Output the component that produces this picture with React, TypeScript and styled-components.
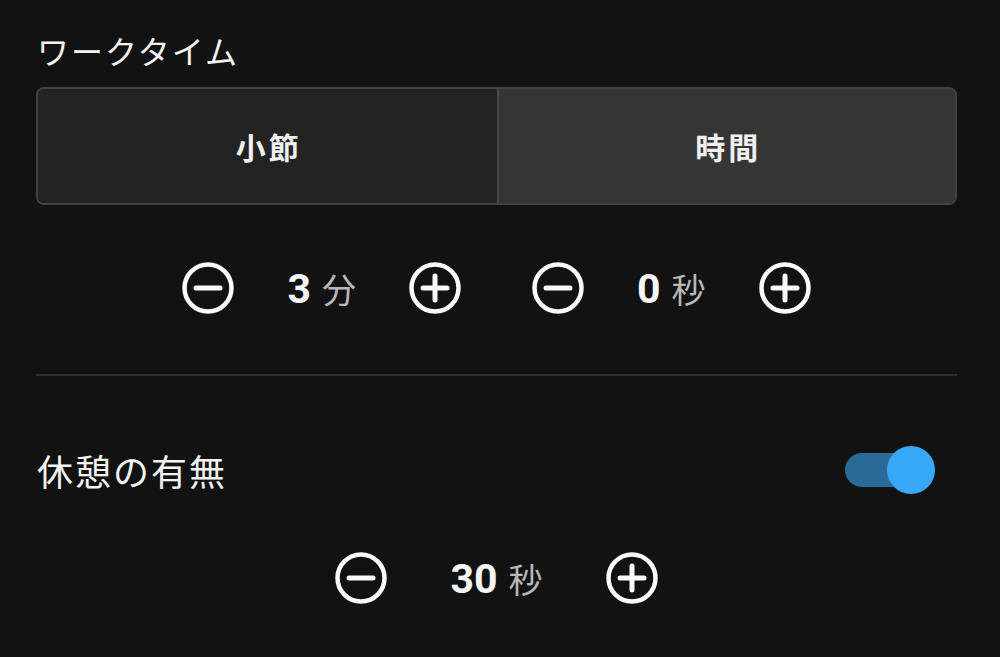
import React, { useState } from 'react';
import styled, { createGlobalStyle } from 'styled-components';

const GlobalStyle = createGlobalStyle`
	html, body {
		margin: 0;
		padding: 0;
		background: #121212;
	}
	body {
		font-family: 'Noto Sans CJK JP', 'Noto Sans', sans-serif;
		color: #f2f2f2;
	}
`;

const Panel = styled.div`
	width: 921px;
	padding: 31px 0 0 36px;
	display: flex;
	flex-direction: column;
`;

const SectionTitle = styled.div`
	font-size: 32px;
	line-height: 38px;
	letter-spacing: 2px;
	padding-left: 1px;
	color: #f4f4f4;
`;

const Segmented = styled.div`
	margin-top: 18px;
	height: 118px;
	box-sizing: border-box;
	display: grid;
	grid-template-columns: 1fr 1fr;
	border: 2px solid #424242;
	border-radius: 8px;
	overflow: hidden;
`;

const Segment = styled.button<{ $active: boolean }>`
	border: none;
	margin: 0;
	padding: 0 0 0 3px;
	background: ${(p) => (p.$active ? '#353535' : '#232323')};
	border-left: ${(p) => (p.$active ? '2px solid #474747' : 'none')};
	color: #f0f0f0;
	font-family: 'Noto Sans CJK JP', sans-serif;
	font-size: 30px;
	letter-spacing: 3px;
	font-weight: 700;
	cursor: pointer;
`;

const StepperLine = styled.div<{ $top: number }>`
	margin-top: ${(p) => p.$top}px;
	display: flex;
	justify-content: center;
	gap: 69px;
`;

const Stepper = styled.div<{ $gap: number }>`
	display: flex;
	align-items: center;
	gap: ${(p) => p.$gap}px;
`;

const IconButton = styled.button`
	width: 54px;
	height: 54px;
	padding: 0;
	border: none;
	background: none;
	color: #fafafa;
	cursor: pointer;
	display: flex;
	align-items: center;
	justify-content: center;
`;

const Value = styled.div`
	display: flex;
	align-items: baseline;
	gap: 11px;
`;

const Num = styled.span`
	font-family: Roboto, 'Liberation Sans', sans-serif;
	font-weight: 700;
	font-size: 41px;
	color: #f6f6f6;
`;

const Unit = styled.span`
	font-size: 34px;
	color: #b8b8b8;
`;

const Divider = styled.hr`
	margin: 59px 0 0;
	border: none;
	height: 2px;
	background: #2f2f2f;
`;

const ToggleRow = styled.div`
	margin-top: 70px;
	display: flex;
	align-items: center;
	justify-content: space-between;
	padding-right: 22px;
	height: 48px;
`;

const RowLabel = styled.div`
	font-size: 36px;
	line-height: 42px;
	letter-spacing: 2px;
	padding-left: 1px;
	color: #f4f4f4;
`;

const Switch = styled.button`
	position: relative;
	width: 92px;
	height: 48px;
	padding: 0;
	border: none;
	background: none;
	cursor: pointer;
	display: flex;
	align-items: center;
`;

const Track = styled.span<{ $on: boolean }>`
	margin-left: 2px;
	width: 70px;
	height: 34px;
	border-radius: 17px;
	background: ${(p) => (p.$on ? '#2a6a99' : '#555')};
`;

const Thumb = styled.span<{ $on: boolean }>`
	position: absolute;
	top: 0;
	left: ${(p) => (p.$on ? '44px' : '0')};
	width: 48px;
	height: 48px;
	border-radius: 50%;
	background: ${(p) => (p.$on ? '#38a9f6' : '#ddd')};
`;

const CircleIcon = ({ plus }: { plus?: boolean }) => (
	<svg width="54" height="54" viewBox="0 0 54 54" fill="none" stroke="currentColor">
		<circle cx="27" cy="27" r="23.5" strokeWidth="4.5" />
		<line x1="15" y1="27" x2="39" y2="27" strokeWidth="5" strokeLinecap="round" />
		{plus && <line x1="27" y1="15" x2="27" y2="39" strokeWidth="5" strokeLinecap="round" />}
	</svg>
);

const Counter = ({ value, unit, gap }: { value: number; unit: string; gap: number }) => (
	<Stepper $gap={gap}>
		<IconButton aria-label="decrease">
			<CircleIcon />
		</IconButton>
		<Value>
			<Num>{value}</Num>
			<Unit>{unit}</Unit>
		</Value>
		<IconButton aria-label="increase">
			<CircleIcon plus />
		</IconButton>
	</Stepper>
);

const App = () => {
	const [mode, setMode] = useState<'round' | 'time'>('time');
	const [rest, setRest] = useState(true);

	return (
		<>
			<GlobalStyle />
			<Panel>
				<SectionTitle>ワークタイム</SectionTitle>
				<Segmented>
					<Segment $active={mode === 'round'} onClick={() => setMode('round')}>
						小節
					</Segment>
					<Segment $active={mode === 'time'} onClick={() => setMode('time')}>
						時間
					</Segment>
				</Segmented>
				<StepperLine $top={56}>
					<Counter value={3} unit="分" gap={52} />
					<Counter value={0} unit="秒" gap={52} />
				</StepperLine>
				<Divider />
				<ToggleRow>
					<RowLabel>休憩の有無</RowLabel>
					<Switch onClick={() => setRest(!rest)}>
						<Track $on={rest} />
						<Thumb $on={rest} />
					</Switch>
				</ToggleRow>
				<StepperLine $top={57}>
					<Counter value={30} unit="秒" gap={62} />
				</StepperLine>
			</Panel>
		</>
	);
};

export default App;
